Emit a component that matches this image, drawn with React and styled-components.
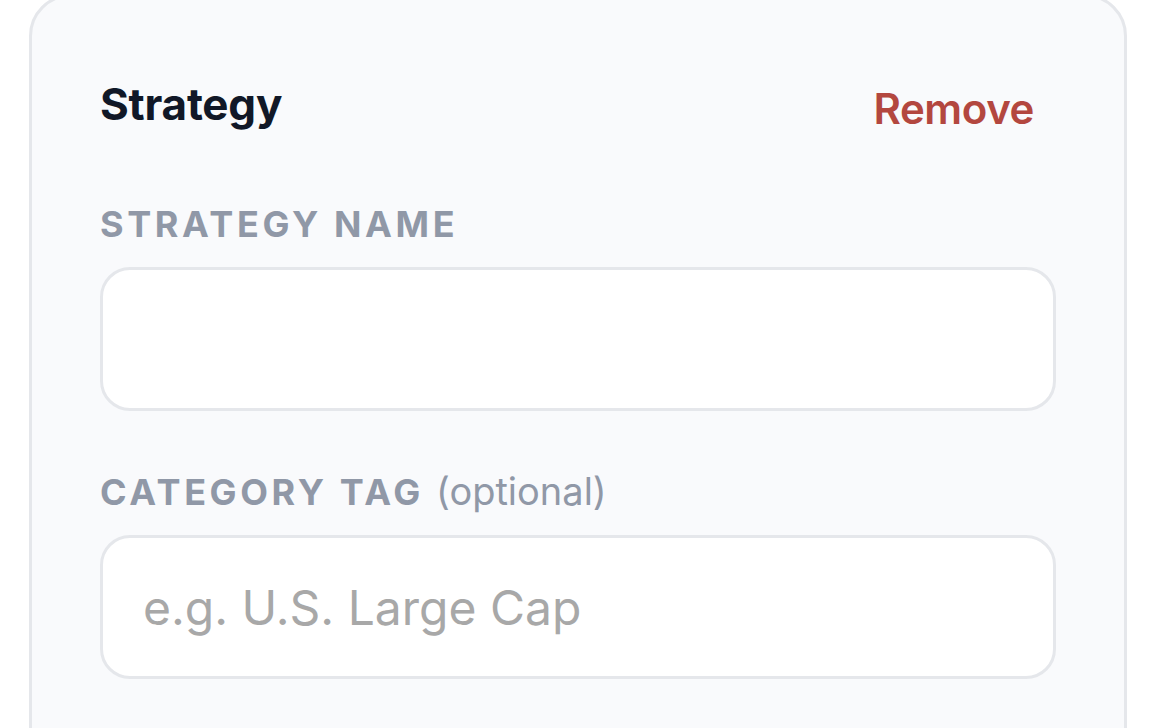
import React from 'react'
import styled, { createGlobalStyle } from 'styled-components'

const GlobalStyle = createGlobalStyle`
    html, body {
        margin: 0;
        padding: 0;
        background: #ffffff;
        font-family: Inter, "Noto Sans", "Liberation Sans", sans-serif;
        overflow: hidden;
    }
    * {
        box-sizing: border-box;
    }
`

const App = () => (
    <>
        <GlobalStyle />
        <Page>
            <Card>
                <Header>
                    <Title>Strategy</Title>
                    <RemoveButton type="button">Remove</RemoveButton>
                </Header>
                <Field>
                    <Label>Strategy Name</Label>
                    <Input type="text" />
                </Field>
                <Field>
                    <Label>
                        Category Tag <Optional>(optional)</Optional>
                    </Label>
                    <Input type="text" placeholder="e.g. U.S. Large Cap" />
                </Field>
            </Card>
        </Page>
    </>
)

const Page = styled.div`
    padding: 0 38px 0 29px;
`

const Card = styled.div`
    margin-top: -6px;
    background: #f9fafc;
    border: 3px solid #e5e7eb;
    border-radius: 42px;
    padding: 68px 68px 80px;
    display: flex;
    flex-direction: column;
    gap: 57px;
    min-height: 900px;
`

const Header = styled.div`
    display: flex;
    justify-content: space-between;
    align-items: center;
    height: 78px;
`

const Title = styled.h3`
    margin: 0;
    font-size: 44px;
    line-height: 78px;
    font-weight: 700;
    letter-spacing: -0.005em;
    color: #111827;
`

const RemoveButton = styled.button`
    border: none;
    background: none;
    padding: 10px 22px 0 0;
    font-family: inherit;
    font-size: 42px;
    line-height: 78px;
    font-weight: 600;
    letter-spacing: -0.01em;
    color: #b3473f;
    cursor: pointer;
`

const Field = styled.div`
    display: flex;
    flex-direction: column;
    gap: 19px;
`

const Label = styled.label`
    display: block;
    height: 48px;
    font-size: 36px;
    line-height: 48px;
    font-weight: 700;
    letter-spacing: 0.1em;
    text-transform: uppercase;
    color: #9098a7;
`

const Optional = styled.span`
    font-size: 38px;
    line-height: 1;
    font-weight: 400;
    letter-spacing: 0;
    text-transform: none;
`

const Input = styled.input`
    height: 144px;
    width: 100%;
    border: 3px solid #e5e7eb;
    border-radius: 30px;
    background: #ffffff;
    padding: 0 40px;
    font-family: inherit;
    font-size: 48px;
    color: #111827;
    outline: none;

    &::placeholder {
        color: #a8a8a8;
    }
`

export default App
